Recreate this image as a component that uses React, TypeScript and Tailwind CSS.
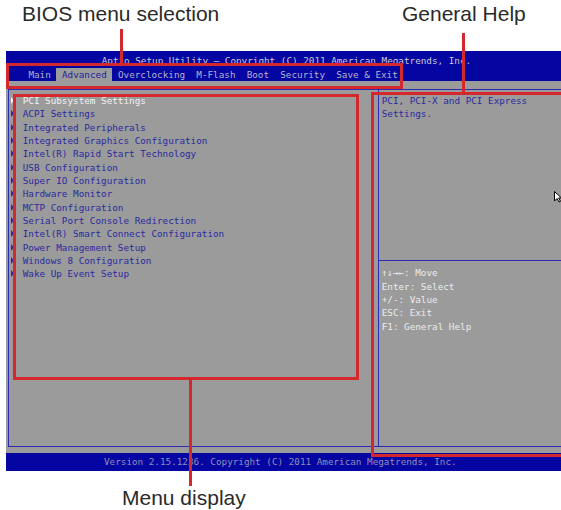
const menuItems = [
  'PCI Subsystem Settings',
  'ACPI Settings',
  'Integrated Peripherals',
  'Integrated Graphics Configuration',
  'Intel(R) Rapid Start Technology',
  'USB Configuration',
  'Super IO Configuration',
  'Hardware Monitor',
  'MCTP Configuration',
  'Serial Port Console Redirection',
  'Intel(R) Smart Connect Configuration',
  'Power Management Setup',
  'Windows 8 Configuration',
  'Wake Up Event Setup',
];

const tabs = ['Main', 'Advanced', 'Overclocking', 'M-Flash', 'Boot', 'Security', 'Save & Exit'];

const keys = ['↑↓→←: Move', 'Enter: Select', '+/-: Value', 'ESC: Exit', 'F1: General Help'];

function Marker() {
  return (
    <svg width="3" height="7" viewBox="0 0 3 7" className="fill-current">
      <polygon points="0,0 3,3.5 0,7" />
    </svg>
  );
}

export default function App() {
  return (
    <div className="relative w-[561px] h-[510px] overflow-hidden bg-white">
      {/* callout labels */}
      <div className="h-[51px] flex pl-[22px] pt-[2px] font-['Liberation_Sans',Arial,sans-serif] text-[21px] leading-[24px] text-[#2a2a2a]">
        <span className="w-[380px]">BIOS menu selection</span>
        <span>General Help</span>
      </div>

      {/* bios screen */}
      <div className="ml-[6px] w-[561px] h-[420px] flex flex-col bg-[#9b9b9b] font-['DejaVu_Sans_Mono',monospace] text-[9.3px] whitespace-pre">
        <div className="h-[30px] bg-[#0505a2] flex flex-col">
          <div className="h-[17px] pl-[95.7px] pt-[2px] leading-[15px] text-[#cacad4]">
            Aptio Setup Utility – Copyright (C) 2011 American Megatrends, Inc.
          </div>
          <div className="h-[13px] flex pl-[16.8px]">
            {tabs.map((t) => (
              <span
                key={t}
                className={
                  t === 'Advanced'
                    ? 'px-[5.6px] leading-[13px] bg-[#9b9b9b] text-[#1e1e9c]'
                    : 'px-[5.6px] leading-[13px] text-[#b4b4c8]'
                }
              >
                {t}
              </span>
            ))}
          </div>
        </div>

        <div className="h-[8px]" />

        <div className="h-[358px] ml-[2px] flex border border-r-0 border-[#2c2cb0]">
          <div className="w-[370px] border-r border-[#2c2cb0] pt-[4px]">
            {menuItems.map((item, i) => (
              <div
                key={item}
                className={`flex items-center leading-[13.33px] ${i === 0 ? 'text-[#f2f2f2]' : 'text-[#2a2a9e]'}`}
              >
                <span className="w-[13.7px] pl-[2px] flex items-center">
                  <Marker />
                </span>
                <span>{item}</span>
              </div>
            ))}
          </div>
          <div className="flex-1 flex flex-col">
            <div className="h-[170px] pl-[2.7px] pt-[4px] leading-[13.33px] text-[#2a2a9e]">
              <div>PCI, PCI-X and PCI Express</div>
              <div>Settings.</div>
            </div>
            <div className="flex-1 border-t border-[#2c2cb0] pl-[2.7px] pt-[5.3px] leading-[13.33px] text-[#ececec]">
              {keys.map((k) => (
                <div key={k}>{k}</div>
              ))}
            </div>
          </div>
        </div>

        <div className="h-[6px]" />

        <div className="h-[18px] bg-[#0505a2] pl-[98px] leading-[18px] text-[#9090b8]">
          Version 2.15.1236. Copyright (C) 2011 American Megatrends, Inc.
        </div>
      </div>

      <div className="h-[39px] flex pl-[122px] pt-[15px]">
        <span className="font-['Liberation_Sans',Arial,sans-serif] text-[21px] leading-[24px] text-[#2a2a2a]">
          Menu display
        </span>
      </div>

      {/* red annotations */}
      <div className="absolute left-[6px] top-[63px] w-[397px] h-[26px] border-[3px] border-[#d5282e]" />
      <div className="absolute left-[120px] top-[29px] w-[3px] h-[35px] bg-[#d5282e]" />
      <div className="absolute left-[13px] top-[94px] w-[346px] h-[286px] border-[3px] border-[#d5282e]" />
      <div className="absolute left-[189px] top-[379px] w-[3px] h-[107px] bg-[#d5282e]" />
      <div className="absolute left-[371px] top-[92px] w-[210px] h-[365px] border-[3px] border-[#d5282e]" />
      <div className="absolute left-[462px] top-[33px] w-[3px] h-[60px] bg-[#d5282e]" />

      {/* mouse pointer */}
      <svg className="absolute left-[554px] top-[191px]" width="8" height="12" viewBox="0 0 8 12">
        <polygon points="0.5,0.5 0.5,10 3,7.5 5,11 6.5,10.3 4.6,7 7.5,7" fill="#fff" stroke="#000" strokeWidth="1" />
      </svg>
    </div>
  );
}
